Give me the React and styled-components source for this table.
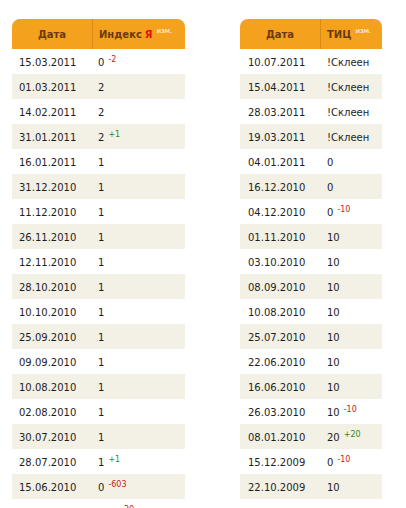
import React from "react";
import styled, { createGlobalStyle } from "styled-components";

const Global = createGlobalStyle`
  html, body { margin: 0; padding: 0; background: #fff; }
  body { font-family: "DejaVu Sans", Verdana, sans-serif; }
`;

const Page = styled.div`
  display: flex;
  align-items: flex-start;
  gap: 55px;
  padding: 19px 0 0 12px;
  height: 508px;
  box-sizing: border-box;
  overflow: hidden;
`;

const Table = styled.table`
  width: ${(p) => p.$width}px;
  border-collapse: separate;
  border-spacing: 0;
  table-layout: fixed;
  font-size: 10px;
  color: #1e1e1e;
`;

const HeadCell = styled.th`
  height: 30px;
  padding: 0 0 0 ${(p) => (p.$center ? 0 : 6)}px;
  background: #f4a11d;
  color: #6b3a0a;
  font-weight: bold;
  font-size: 10px;
  text-align: ${(p) => (p.$center ? "center" : "left")};
  vertical-align: middle;
  border-left: ${(p) => (p.$divider ? "1px solid #d98a12" : "none")};
  border-radius: ${(p) => (p.$first ? "8px 0 0 0" : "0 8px 0 0")};
  white-space: nowrap;
`;

const Ya = styled.span`
  color: #e0140c;
  margin-left: 3px;
`;

const Izm = styled.sup`
  color: #fff;
  font-size: 7px;
  font-weight: normal;
  margin-left: 4px;
  position: relative;
  top: -1px;
  vertical-align: top;
  line-height: 1;
`;

const Row = styled.tr`
  background: ${(p) => (p.$shade ? "#f3f1e6" : "#fff")};
`;

const Cell = styled.td`
  height: 25px;
  padding: 1px 0 0 ${(p) => p.$pad}px;
  vertical-align: middle;
  white-space: nowrap;
  box-sizing: border-box;
`;

const Change = styled.span`
  font-size: 8px;
  color: ${(p) => (p.$up ? "#2f8a1c" : "#c8201a")};
  margin-left: 4px;
  position: relative;
  top: -4px;
`;

const left = [
  ["15.03.2011", "0", "-2"],
  ["01.03.2011", "2"],
  ["14.02.2011", "2"],
  ["31.01.2011", "2", "+1"],
  ["16.01.2011", "1"],
  ["31.12.2010", "1"],
  ["11.12.2010", "1"],
  ["26.11.2010", "1"],
  ["12.11.2010", "1"],
  ["28.10.2010", "1"],
  ["10.10.2010", "1"],
  ["25.09.2010", "1"],
  ["09.09.2010", "1"],
  ["10.08.2010", "1"],
  ["02.08.2010", "1"],
  ["30.07.2010", "1"],
  ["28.07.2010", "1", "+1"],
  ["15.06.2010", "0", "-603"],
  ["01.06.2010", "603", "-20"],
];

const right = [
  ["10.07.2011", "!Склеен"],
  ["15.04.2011", "!Склеен"],
  ["28.03.2011", "!Склеен"],
  ["19.03.2011", "!Склеен"],
  ["04.01.2011", "0"],
  ["16.12.2010", "0"],
  ["04.12.2010", "0", "-10"],
  ["01.11.2010", "10"],
  ["03.10.2010", "10"],
  ["08.09.2010", "10"],
  ["10.08.2010", "10"],
  ["25.07.2010", "10"],
  ["22.06.2010", "10"],
  ["16.06.2010", "10"],
  ["26.03.2010", "10", "-10"],
  ["08.01.2010", "20", "+20"],
  ["15.12.2009", "0", "-10"],
  ["22.10.2009", "10"],
];

function DataTable({ width, cols, title, rows, datePad, valPad }) {
  return (
    <Table $width={width}>
      <colgroup>
        <col style={{ width: cols[0] }} />
        <col style={{ width: cols[1] }} />
      </colgroup>
      <thead>
        <tr>
          <HeadCell $center $first>Дата</HeadCell>
          <HeadCell $divider>
            {title}
            <Izm>изм.</Izm>
          </HeadCell>
        </tr>
      </thead>
      <tbody>
        {rows.map(([d, v, c], i) => (
          <Row key={i} $shade={i % 2 === 1}>
            <Cell $pad={datePad}>{d}</Cell>
            <Cell $pad={valPad}>
              {v}
              {c && <Change $up={c.startsWith("+")}>{c}</Change>}
            </Cell>
          </Row>
        ))}
      </tbody>
    </Table>
  );
}

export default function App() {
  return (
    <>
      <Global />
      <Page>
        <DataTable
          width={173}
          cols={[80, 93]}
          title={<>Индекс<Ya>Я</Ya></>}
          rows={left}
          datePad={7}
          valPad={6}
        />
        <DataTable
          width={142}
          cols={[80, 62]}
          title="ТИЦ"
          rows={right}
          datePad={8}
          valPad={7}
        />
      </Page>
    </>
  );
}
